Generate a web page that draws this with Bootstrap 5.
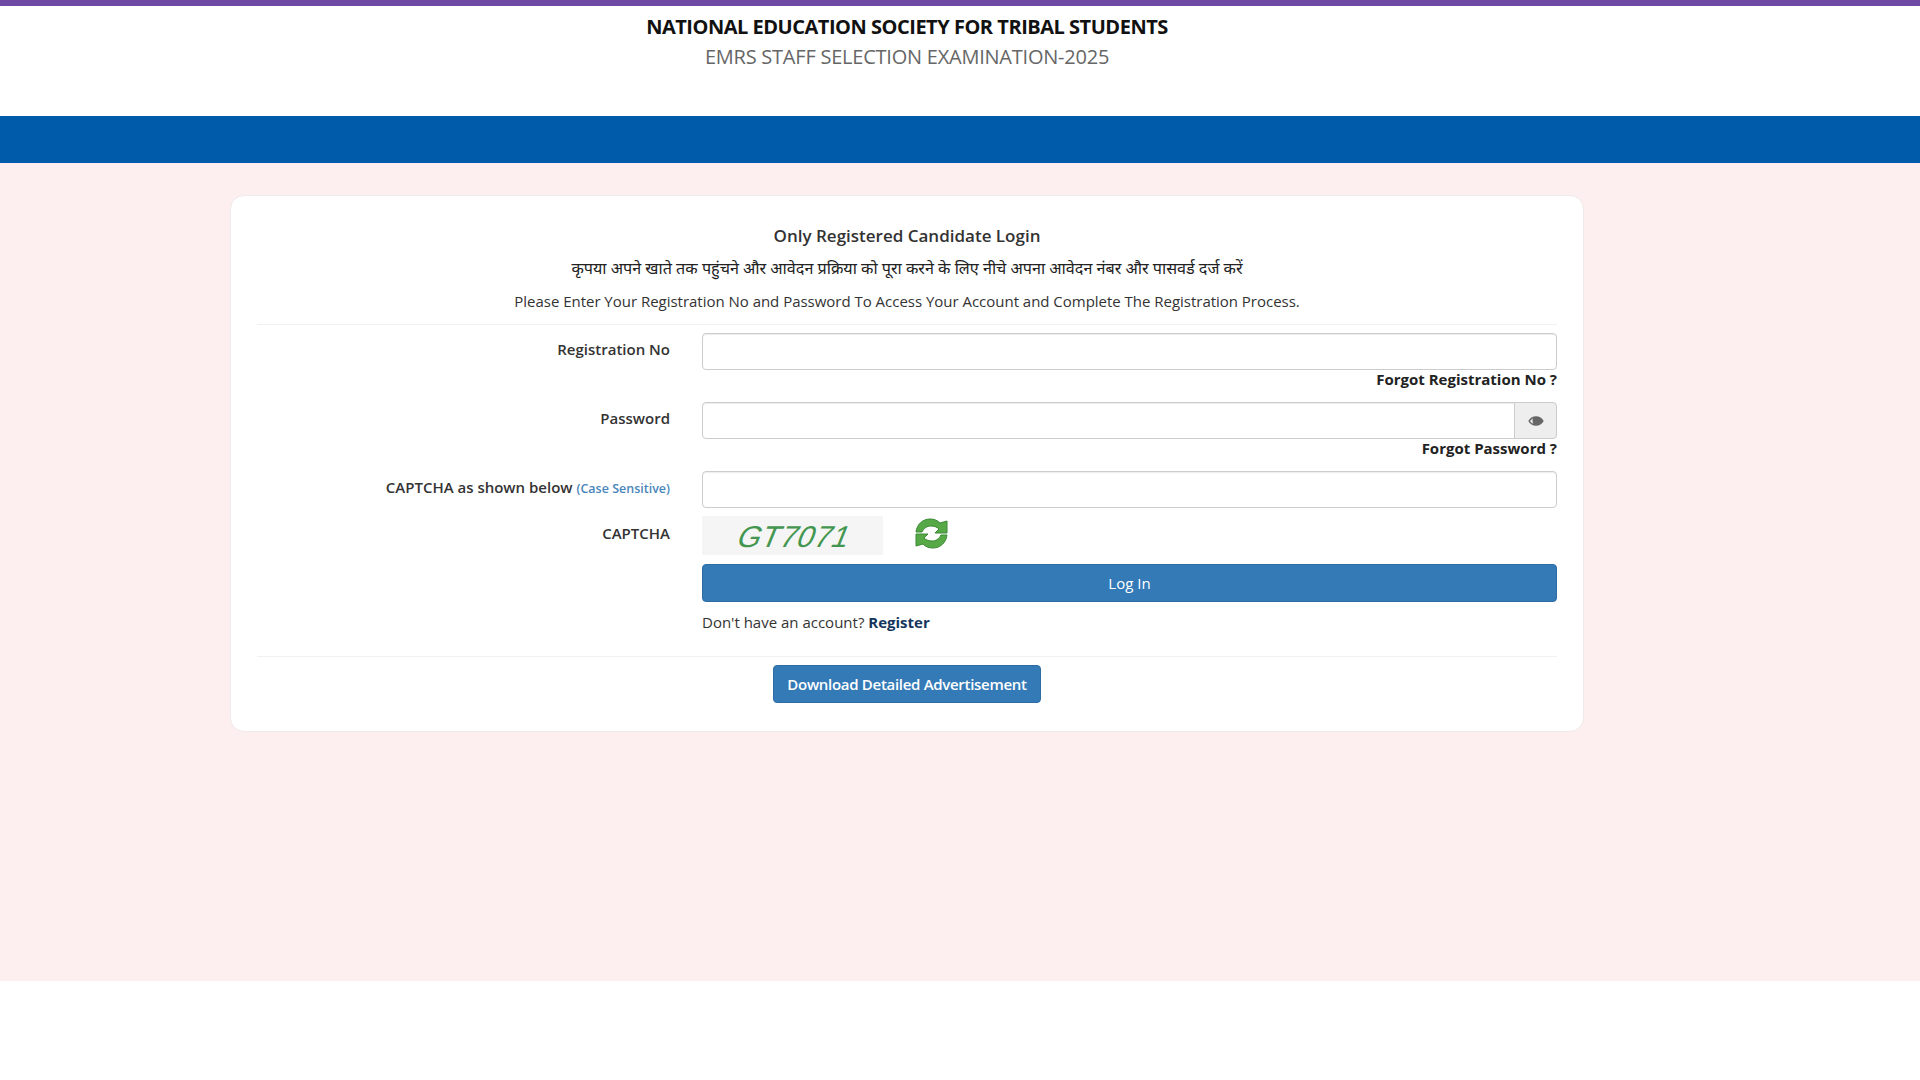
<!DOCTYPE html>
<html lang="en">
<head>
    <meta charset="UTF-8">
    <meta name="viewport" content="width=device-width, initial-scale=1.0">
    <title>EMRS Staff Selection Examination-2025</title>
    <link href="https://cdn.jsdelivr.net/npm/bootstrap@5.3.0/dist/css/bootstrap.min.css" rel="stylesheet">
    <style>
        body {
            font-family: "Open Sans", "Noto Sans", sans-serif;
            font-size: 15px;
            color: #333;
            background: #fff;
        }
        .top-strip { height: 6px; background: #6f4aa5; }
        .site-head { width: 1354px; margin-left: 230px; height: 110px; padding-top: 5px; text-align: center; }
        .site-title { font-size: 20px; font-weight: 700; line-height: 32px; color: #111; margin: 0; letter-spacing: -0.48px; }
        .site-sub { font-size: 20px; font-weight: 400; line-height: 28px; color: #666; margin: 0; letter-spacing: -0.23px; }
        .blue-band { height: 47px; background: #005bab; }
        .pink-area { height: 818px; background: #fdeeef; padding: 32px 0 0 230px; }
        .login-box { width: 1354px; height: 537px; background: #fff; border: 1px solid #f0e9e9; border-radius: 14px; padding: 22px 26px 0; }
        .login-title { font-size: 17px; font-weight: 600; line-height: 36px; text-align: center; margin: 0; }
        .login-hindi { font-size: 16.15px; line-height: 28px; text-align: center; margin: 0; color: #222; }
        .login-note { font-size: 15px; line-height: 38px; text-align: center; margin: 0; letter-spacing: -0.02px; padding-bottom: 4px; }
        .thin-rule { border: 0; border-top: 1px solid #f1f1f1; opacity: 1; margin: 0; }
        .label-col { width: 445px; flex: none; padding-right: 32px; padding-top: 5px; text-align: right; font-weight: 600; font-size: 15px; }
        .field-col { flex: 1 1 auto; min-width: 0; }
        .field-input { height: 37px; border: 1px solid #ccc; border-radius: 4px; box-shadow: inset 0 1px 1px rgba(0,0,0,.075); }
        .eye-box { width: 43px; justify-content: center; background: #eee; border: 1px solid #ccc; border-radius: 0 4px 4px 0; padding: 0; }
        .forgot-link { display: block; height: 32px; line-height: 19px; text-align: right; font-weight: 700; font-size: 15px; color: #222; text-decoration: none; }
        .case-note { font-size: 12.5px; font-weight: 600; color: #4a86bb; }
        .captcha-label { padding-top: 6px; }
        .captcha-pic { width: 181px; height: 39px; background: #f5f5f5; display: flex; align-items: center; justify-content: center; color: #43964f; font-family: "Liberation Sans", sans-serif; font-size: 30px; letter-spacing: 0.5px; padding: 2px 0 0 4px; }
        .captcha-word { display: inline-block; transform: skewX(-22deg); }
        .refresh-ico { margin: 2px 0 0 32px; }
        .login-btn { height: 38px; margin-top: 1px; background: #337ab7; border: 1px solid #2e6da4; border-radius: 4px; color: #fff; font-size: 15px; padding: 0; }
        .ad-btn { height: 38px; width: 268px; background: #337ab7; border: 1px solid #2e6da4; border-radius: 4px; color: #fff; font-size: 15px; font-weight: 600; padding: 0; letter-spacing: -0.3px; }
        .signup-line { line-height: 20px; margin: 10px 0 24px; font-size: 15px; }
        .signup-line a { color: #14365d; font-weight: 700; text-decoration: none; }
    </style>
</head>
<body>
<div class="top-strip"></div>
<header class="site-head">
    <h1 class="site-title">NATIONAL EDUCATION SOCIETY FOR TRIBAL STUDENTS</h1>
    <h2 class="site-sub">EMRS STAFF SELECTION EXAMINATION-2025</h2>
</header>
<div class="blue-band"></div>
<main class="pink-area">
    <div class="login-box">
        <p class="login-title">Only Registered Candidate Login</p>
        <p class="login-hindi">कृपया अपने खाते तक पहुंचने और आवेदन प्रक्रिया को पूरा करने के लिए नीचे अपना आवेदन नंबर और पासवर्ड दर्ज करें</p>
        <p class="login-note">Please Enter Your Registration No and Password To Access Your Account and Complete The Registration Process.</p>
        <hr class="thin-rule mb-2">
        <form>
            <div class="d-flex">
                <label class="label-col" for="regNo">Registration No</label>
                <div class="field-col">
                    <input class="form-control field-input" id="regNo" type="text">
                    <a class="forgot-link" href="#">Forgot Registration No ?</a>
                </div>
            </div>
            <div class="d-flex">
                <label class="label-col" for="pwd">Password</label>
                <div class="field-col">
                    <div class="input-group">
                        <input class="form-control field-input" id="pwd" type="password">
                        <span class="input-group-text eye-box">
                            <svg width="16" height="12" viewBox="0 0 16 12"><path fill="#666" d="M8 1.200C4.700 1.200 1.900 3.100.3 6c1.600 2.900 4.400 4.800 7.700 4.800s6.100-1.900 7.700-4.800C14.100 3.100 11.300 1.200 8 1.200z"/><path fill="#eee" d="M2 6c1-1.300 2-2.200 3.200-2.800A3.400 3.400 0 0 0 4.600 6c0 1 .3 1.900.8 2.700C4 8.200 3 7.300 2 6z"/></svg>
                        </span>
                    </div>
                    <a class="forgot-link" href="#">Forgot Password ?</a>
                </div>
            </div>
            <div class="d-flex mb-2">
                <label class="label-col" for="cap">CAPTCHA as shown below <span class="case-note">(Case Sensitive)</span></label>
                <div class="field-col">
                    <input class="form-control field-input" id="cap" type="text">
                </div>
            </div>
            <div class="d-flex mb-2">
                <div class="label-col captcha-label">CAPTCHA</div>
                <div class="field-col d-flex">
                    <div class="captcha-pic"><span class="captcha-word">GT7071</span></div>
                    <svg class="refresh-ico" width="33" height="31" viewBox="0 0 33 31">
                        <path fill="#57a846" stroke="#3b8a35" stroke-width="1" stroke-linejoin="round" d="M1 14C2 6 8 1 15 1c4 0 7 1 10 4l7-2v12H20l4-4c-2-2-5-3-8-3-4 0-7 2-9 6z"/>
                        <path fill="#57a846" stroke="#3b8a35" stroke-width="1" stroke-linejoin="round" d="M32 17c-1 8-7 13-14 13-4 0-7-1-10-4l-7 2V16h12l-4 4c2 2 5 3 8 3 4 0 7-2 9-6z"/>
                    </svg>
                </div>
            </div>
            <div class="d-flex">
                <div class="label-col"></div>
                <div class="field-col">
                    <button class="btn login-btn w-100" type="button">Log In</button>
                    <p class="signup-line">Don't have an account? <a href="#">Register</a></p>
                </div>
            </div>
        </form>
        <hr class="thin-rule mb-2">
        <div class="text-center">
            <button class="btn ad-btn" type="button">Download Detailed Advertisement</button>
        </div>
    </div>
</main>
</body>
</html>
